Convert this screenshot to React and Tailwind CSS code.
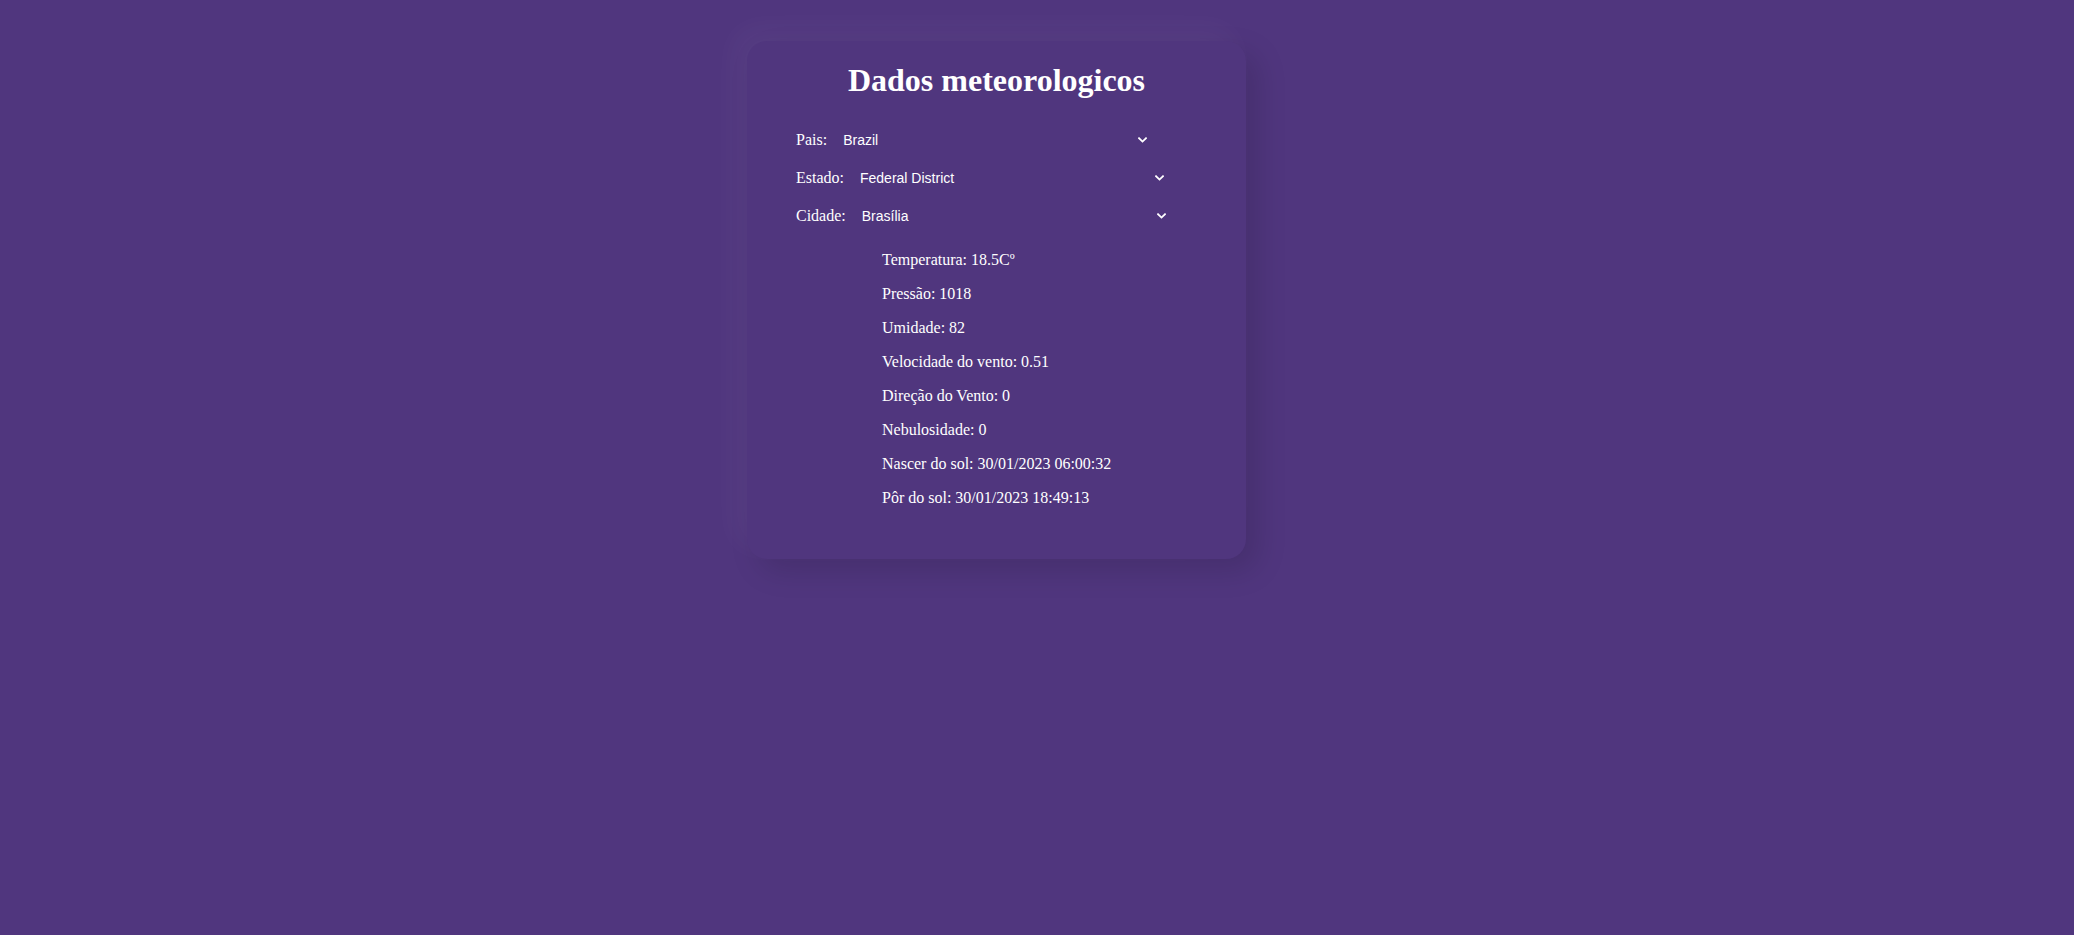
import React, { useState } from 'react';

const serif = "font-['Liberation_Serif','Times_New_Roman',serif]";
const sans = "font-['Liberation_Sans',Arial,sans-serif]";

const Chevron = () => (
  <svg
    className="pointer-events-none absolute right-0 top-1/2 h-[6px] w-[9px] -translate-y-1/2"
    viewBox="0 0 9 6"
    fill="none"
  >
    <path d="M1 1.2 L4.5 4.6 L8 1.2" stroke="white" strokeWidth="1.8" strokeLinecap="square" />
  </svg>
);

const Campo = ({ label, value, options, onChange }) => (
  <div className="flex h-[20px] items-center">
    <label className="leading-[20px]">{label}</label>
    <div className="relative ml-4 w-[304px]">
      <select
        value={value}
        onChange={(e) => onChange(e.target.value)}
        className={`${sans} h-[20px] w-full appearance-none border-0 bg-transparent p-0 text-[14px] leading-[20px] text-white outline-none`}
      >
        {options.map((o) => (
          <option key={o} value={o} className="text-black">
            {o}
          </option>
        ))}
      </select>
      <Chevron />
    </div>
  </div>
);

const App = () => {
  const [pais, setPais] = useState('Brazil');
  const [estado, setEstado] = useState('Federal District');
  const [cidade, setCidade] = useState('Brasília');

  const dados = [
    'Temperatura: 18.5Cº',
    'Pressão: 1018',
    'Umidade: 82',
    'Velocidade do vento: 0.51',
    'Direção do Vento: 0',
    'Nebulosidade: 0',
    'Nascer do sol: 30/01/2023 06:00:32',
    'Pôr do sol: 30/01/2023 18:49:13',
  ];

  return (
    <div className={`${serif} min-h-screen w-full bg-[#50367e] pt-[41px] text-white`}>
      <div className="ml-[747px] w-[499px] rounded-[20px] bg-[#50367e] pt-[21px] pb-[52px] shadow-[-12px_-12px_30px_rgba(255,255,255,0.045),12px_12px_30px_rgba(0,0,0,0.13)]">
        <h1 className="text-center text-[32px] font-bold leading-[37px]">Dados meteorologicos</h1>

        <div className="mt-[31px] flex flex-col gap-[18px] pl-[49px] text-[16px]">
          <Campo label="Pais:" value={pais} options={['Brazil']} onChange={setPais} />
          <Campo label="Estado:" value={estado} options={['Federal District']} onChange={setEstado} />
          <Campo label="Cidade:" value={cidade} options={['Brasília']} onChange={setCidade} />
        </div>

        <div className="mt-[25px] flex flex-col gap-[16px] pl-[135px] text-[16px] leading-[18px]">
          {dados.map((d) => (
            <p key={d}>{d}</p>
          ))}
        </div>
      </div>
    </div>
  );
};

export default App;
